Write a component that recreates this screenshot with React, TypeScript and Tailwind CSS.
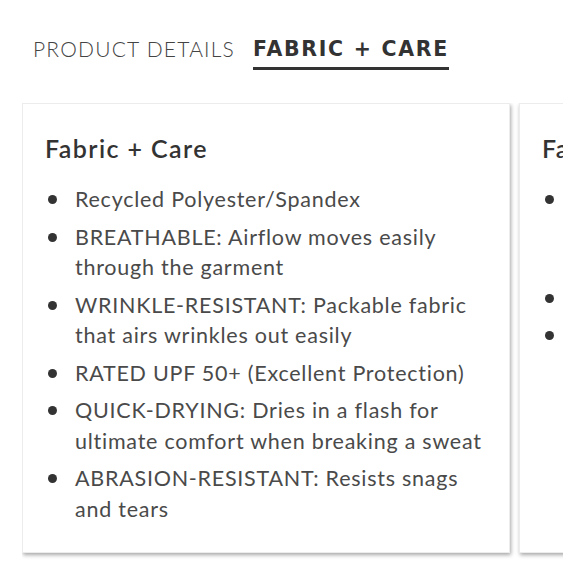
import React from 'react';

const items = [
    'Recycled Polyester/Spandex',
    'BREATHABLE: Airflow moves easily through the garment',
    'WRINKLE-RESISTANT: Packable fabric that airs wrinkles out easily',
    'RATED UPF 50+ (Excellent Protection)',
    'QUICK-DRYING: Dries in a flash for ultimate comfort when breaking a sweat',
    'ABRASION-RESISTANT: Resists snags and tears',
];

const otherItems = [
    'Lightweight stretch woven shorts built for hiking, climbing and everyday adventures outdoors',
    'Machine wash cold',
    'Tumble dry low',
];

const Card = ({ list }: { list: string[] }) => (
    <div className="shrink-0 w-[488px] h-[450px] px-[22px] pt-[28px] bg-white border border-[#ececec] shadow-[1px_2px_4px_rgba(0,0,0,0.35)]">
        <h3 className="text-[25px] font-semibold tracking-[1.4px] text-[#333] leading-[32px]">Fabric + Care</h3>
        <ul className="mt-[20px] flex flex-col gap-[7px]">
            {list.map((item) => (
                <li key={item} className="flex text-[21.5px] tracking-[0.75px] leading-[30.5px] text-[#4a4a4a]">
                    <span className="w-[30px] shrink-0 flex items-start pt-[11px] pl-[3px]">
                        <span className="block w-[9px] h-[9px] rounded-full bg-[#333]" />
                    </span>
                    <span>{item}</span>
                </li>
            ))}
        </ul>
    </div>
);

export default function App() {
    return (
        <div className="w-[580px] h-[580px] bg-white font-['Lato','Noto_Sans',sans-serif]">
            <div className="flex items-start gap-[18px] pl-[33px] pt-[36px]">
                <button className="text-[21px] font-light tracking-[1.2px] text-[#444] leading-[26px]">
                    PRODUCT DETAILS
                </button>
                <button className="flex flex-col font-['DejaVu_Sans',sans-serif] text-[20.5px] font-bold tracking-[1.7px] text-[#333] leading-[26px]">
                    FABRIC + CARE
                    <span className="mt-[5px] h-[3px] w-full bg-[#333]" />
                </button>
            </div>
            <div className="ml-[22px] mt-[33px] w-[541px] overflow-hidden pb-[10px]">
                <div className="flex gap-[9px] pr-[4px]">
                    <Card list={items} />
                    <Card list={otherItems} />
                </div>
            </div>
        </div>
    );
}
